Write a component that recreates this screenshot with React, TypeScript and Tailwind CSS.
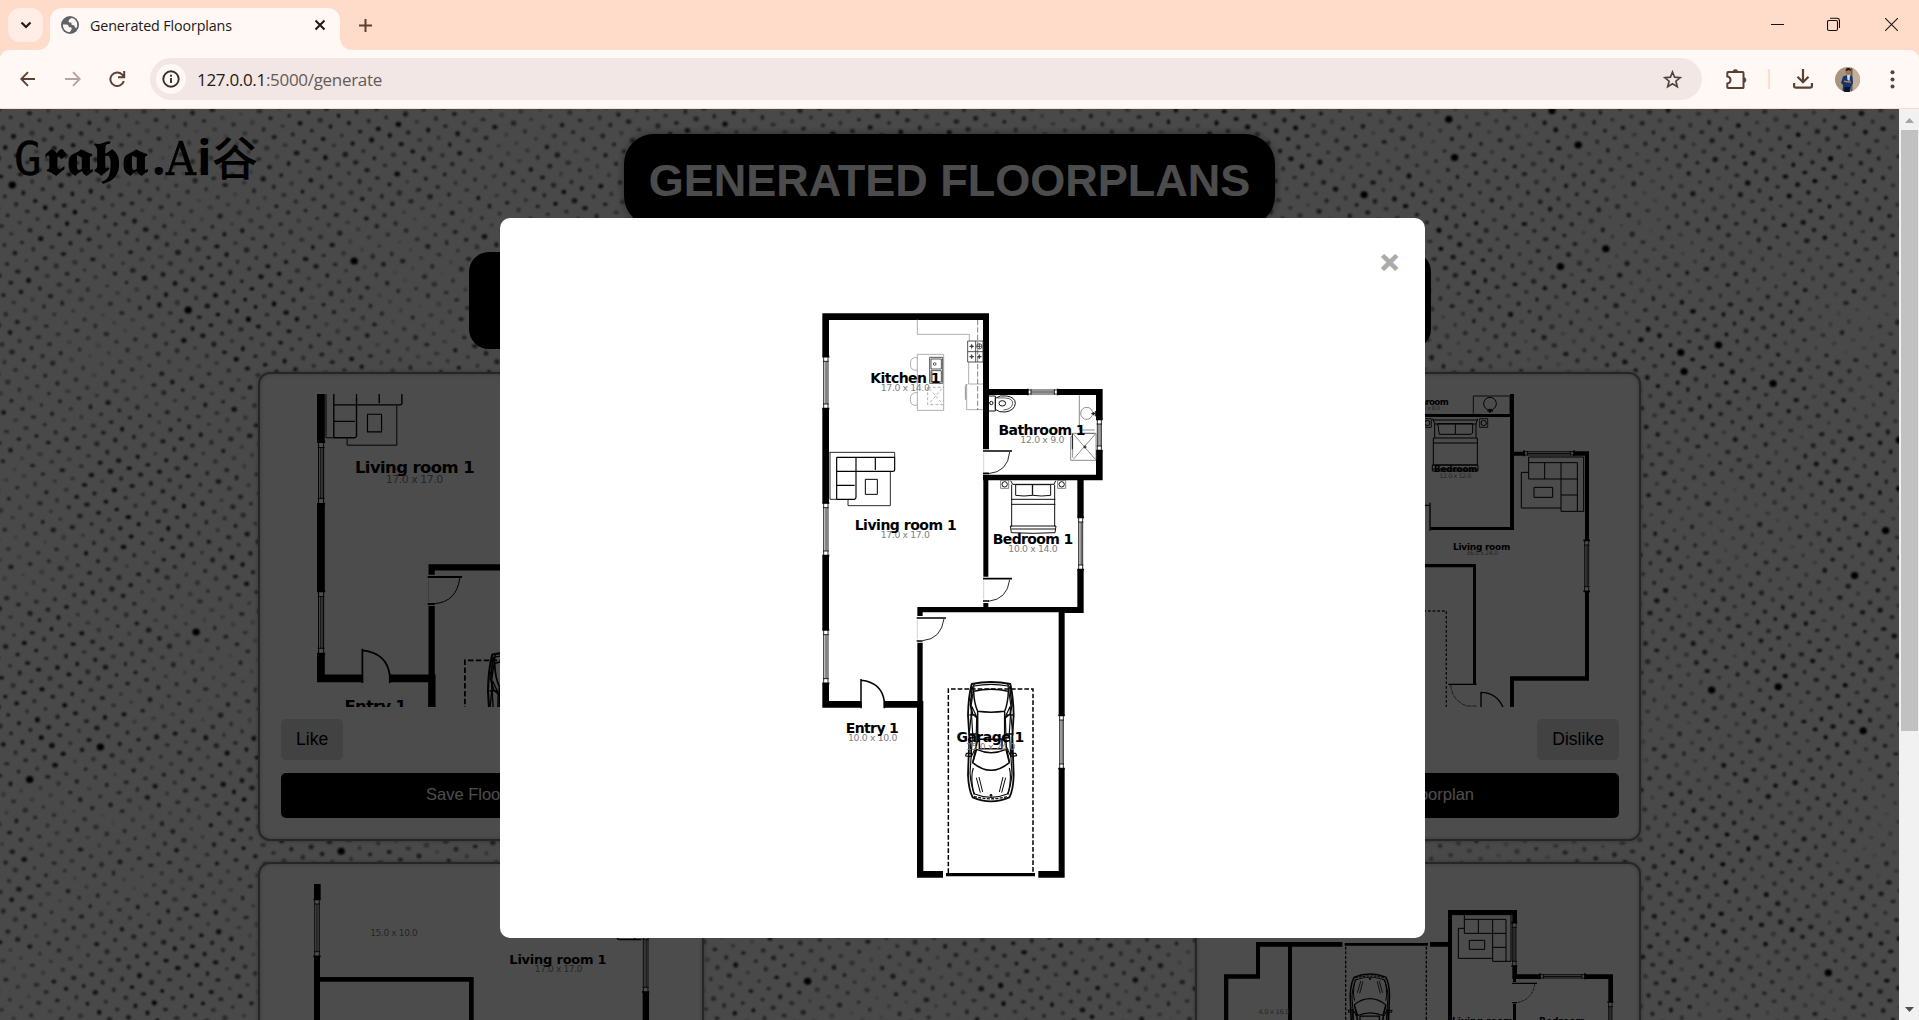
import React from "react";

const hash = (n: number) => {
  const s = Math.sin(n * 12.9898 + 78.233) * 43758.5453;
  return s - Math.floor(s);
};

type Dot = { x: number; y: number; rx: number; ry: number; o: number };

const dots: Dot[] = [];
for (let n = -180; n < 240; n++) {
  for (let m = -180; m < 180; m++) {
    const x = 1834.3 + 11 * (n - 145) - 7.7 * m;
    const y = 568 + 7.8 * (n - 145) + 11.2 * m;
    if (x < -5 || x > 1905 || y < -5 || y > 915) continue;
    const k = n * 91.7 + m * 37.31;
    const d = hash(k);
    const wave = 0.5 + 0.25 * (Math.sin(x / 47 + y / 83) + Math.sin(y / 39 - x / 71));
    const big = hash(k + 0.7) > 0.994;
    dots.push({
      x: Math.round((x + (hash(k + 0.3) - 0.5) * 1.6) * 10) / 10,
      y: Math.round((y + (hash(k + 0.5) - 0.5) * 1.6) * 10) / 10,
      rx: big ? 3.7 : 1.6 + hash(k + 0.2) * 1.3,
      ry: big ? 3.5 : 1.5 + hash(k + 0.9) * 1.2,
      o: big ? 1 : Math.min(1, 0.12 + d * 0.55 + wave * 0.35),
    });
  }
}

const Texture = () => (
  <svg className="absolute inset-0" width="1899" height="911" viewBox="0 0 1899 911">
    <defs>
      <filter id="soft" x="0" y="0" width="100%" height="100%">
        <feGaussianBlur stdDeviation="1.05" />
      </filter>
    </defs>
    <g filter="url(#soft)">
      {dots.map((d, i) => (
        <ellipse key={i} cx={d.x} cy={d.y} rx={d.rx} ry={d.ry} fillOpacity={d.o} />
      ))}
    </g>
  </svg>
);

/* Rooms are drawn in units of one third of a pixel. */
type TProps = { x: number; y: number; w: number; size?: number; children: string };
const Room = ({ x, y, w, size = 42, children }: TProps) => (
  <text x={x} y={y} textAnchor="middle" textLength={w} fontFamily="DejaVu Sans" fontWeight="bold" fontSize={size} fill="#000">
    {children}
  </text>
);
const Dim = ({ x, y, w, size = 28, children }: TProps) => (
  <text x={x} y={y} textAnchor="middle" textLength={w} fontFamily="DejaVu Sans" fontSize={size} fill="#808080">
    {children}
  </text>
);

type Box = { x: number; y: number; w: number; h: number };
const VWindow = ({ x, y, w, h }: Box) => (
  <g fill="none" stroke="#000" strokeWidth="2.5">
    <path d={`M${x + 2} ${y}V${y + h}M${x + w - 2} ${y}V${y + h}M${x} ${y + 14}H${x + w}M${x} ${y + h - 14}H${x + w}`} />
    <path d={`M${x + w * 0.4} ${y + 14}V${y + h - 14}M${x + w * 0.65} ${y + 14}V${y + h - 14}`} strokeWidth="1.8" />
    <path d={`M${x - 2} ${y}H${x + w + 2}M${x - 2} ${y + h}H${x + w + 2}`} strokeWidth="5" />
  </g>
);
const HWindow = ({ x, y, w, h }: Box) => (
  <g fill="none" stroke="#000" strokeWidth="2.5">
    <path d={`M${x} ${y + 2}H${x + w}M${x} ${y + h - 2}H${x + w}M${x + 10} ${y}V${y + h}M${x + w - 10} ${y}V${y + h}`} />
    <path d={`M${x + 10} ${y + h / 2}H${x + w - 10}`} strokeWidth="3" />
    <path d={`M${x} ${y - 2}V${y + h + 2}M${x + w} ${y - 2}V${y + h + 2}`} strokeWidth="5" />
  </g>
);

const Car = () => (
  <g fill="none" stroke="#0a0a0a" strokeWidth="4.500" strokeLinejoin="round">
    <path d="M515 282Q573 270 631 282Q640 320 641 375L637 440L641 555Q640 600 628 622Q573 646 518 622Q506 600 504 555L508 440L504 375Q505 320 515 282Z" strokeWidth="5.500" />
    <path d="M522 288Q573 278 624 288L633 350L628 430L636 550Q632 595 622 612Q573 632 524 612Q514 595 510 550L518 430L513 350Z" strokeWidth="3.500" />
    <path d="M521 304Q573 292 625 304Q624 340 614 364Q573 369 533 364Q522 340 521 304Z" />
    <path d="M533 366V448L519 515M614 366V448L628 515M533 448H614M538 445V476H606V445" />
    <path d="M530 478Q573 498 618 478L628 518Q573 564 518 518Z" />
    <path d="M516 350L530 380L528 470L514 500L508 430ZM630 350L616 380L619 470L633 500L638 430Z" strokeWidth="3.500" />
    <path d="M517 290L511 345L518 372L533 385M629 290L636 345L630 372L614 385M508 375H528M640 375H618M507 432H528M640 432H618" strokeWidth="4.500" />
    <path d="M516 490L499 490L497 498L514 500M630 490L647 490L650 497L632 500" strokeWidth="3.500" />
    <path d="M529 563L541 608M537 561L548 606M617 563L605 608M609 561L598 606" strokeWidth="3" />
    <path d="M520 534Q510 560 522 614M624 614Q636 560 628 534M524 282L512 300M622 282L634 300" strokeWidth="3.500" />
    <path d="M522 619Q573 634 624 619" strokeWidth="4" strokeDasharray="9 4" />
    <circle cx="573" cy="616" r="3" fill="#000" strokeWidth="3" />
    <circle cx="512" cy="330" r="3" strokeWidth="3" />
  </g>
);

const MainPlan = () => (
  <g>
    <path
      d="M67 70H567V90H67ZM67 70H87V200H67ZM67 355H87V640H67ZM67 797H87V1020H67ZM67 1180H87V1253H67ZM549 70H567V478H549ZM550 556H565V860H550ZM550 939H565V955H550ZM565 297H685V315H565ZM772 297H908V315H772ZM888 297H908V388H888ZM888 482H908V571H888ZM549 554H908V571H549ZM832 554H851V682H832ZM832 838H851V969H832ZM352 951H851V967H352ZM776 951H851V969H776ZM352 951H368V978H352ZM352 1058H368V1240H352ZM351 1233H370V1763H351ZM67 1233H185V1253H67ZM251 1233H370V1253H251ZM776 951H794V1277H776ZM776 1434H794V1763H776ZM351 1743H429V1763H351ZM715 1743H794V1763H715ZM438 1749H705V1759H438Z"
      fill="#000"
    />
    <VWindow x={69} y={200} w={17} h={156} />
    <VWindow x={69} y={639} w={17} h={158} />
    <VWindow x={69} y={1020} w={17} h={160} />
    <VWindow x={890} y={388} w={16} h={94} />
    <VWindow x={834} y={682} w={16} h={157} />
    <VWindow x={777} y={1276} w={15} h={160} />
    <HWindow x={683} y={298} w={90} h={16} />
    <g fill="none" stroke="#000" strokeWidth="3">
      <path d="M629 486Q624 546 565 551M629 869Q622 928 565 934M432 986Q424 1047 368 1052" strokeWidth="2.5" />
      <path d="M549 483H636M549 866H636M350 984H438M549 550H567M549 933H567M350 1053H368" strokeWidth="5" />
      <path d="M551 488V546M551 871V928M352 990V1048" stroke="#aaa" strokeWidth="1.5" />
      <path d="M183 1255V1167M184 1171Q246 1178 253 1235M253 1230V1255" strokeWidth="4.5" />
    </g>
    <path d="M445 1749V1197H699V1749" fill="none" stroke="#000" strokeWidth="4.5" strokeDasharray="14 6" />
    <g fill="none" stroke="#888" strokeWidth="2">
      <path d="M352 88V133H508V152M352 193H431V361H352ZM506 216V282M506 282H549M500 282V359H549M352 203Q331 200 331 222Q331 244 352 240M352 308Q331 306 331 328Q331 350 352 345M496 290V328M502 284H497V330" />
      <path d="M533 90V360" stroke="#444" strokeDasharray="16 6" />
      <path d="M383 292H431M383 292V344H431M388 296L426 340M426 296L388 340" strokeDasharray="9 6" />
    </g>
    <g fill="none" stroke="#333" strokeWidth="2.5">
      <path d="M503 153H549V216H503ZM503 185H549M527 153V216M389 202H428V280H389ZM393 207H424V237H393ZM393 242H424V276H393ZM396 245V276" />
      <path d="M508 169H522M515 162V176M531 169H545M538 162V176M508 200H522M515 193V207M531 200H545M538 193V207" />
      <circle cx="515" cy="169" r="3" /><circle cx="538" cy="169" r="8" /><circle cx="515" cy="200" r="3" /><circle cx="538" cy="200" r="3" />
      <circle cx="404" cy="222" r="4" />
    </g>
    <g fill="none" stroke="#111" strokeWidth="3">
      <path d="M564 318H586V363H564M586 325Q600 314 620 318Q646 322 646 340Q644 362 615 366Q598 368 586 358Z" />
      <ellipse cx="607" cy="340" rx="10" ry="8" /><circle cx="574" cy="339" r="5" />
      <path d="M592 324Q640 320 638 340Q636 358 610 360" strokeWidth="2" />
      <path d="M838 316V420H884M846 430H884M818 430H888V511H812V440H818V503" strokeWidth="2" stroke="#555" />
      <path d="M820 432L886 508M886 432L820 508" strokeWidth="2" stroke="#555" />
      <path d="M817 430V478" />
      <circle cx="860" cy="370" r="18" strokeWidth="2" stroke="#555" /><circle cx="855" cy="471" r="3" />
      <path d="M874 371H886M881 366V376M886 363V379" strokeWidth="3" />
      <path d="M602 571H626V595H602ZM773 571H797V595H773Z" strokeWidth="2" stroke="#444" /><circle cx="614" cy="583" r="8" /><circle cx="785" cy="583" r="8" />
      <path d="M632 572L638 583H762L767 572M635 584V710M764 584V710M647 584H697V616Q672 620 647 616ZM698 584H752V616Q725 620 698 616ZM634 628H766M634 643H766M631 708H768L765 728Q700 732 634 728ZM634 717H766" />
    </g>
    <g fill="none" stroke="#000" strokeWidth="3.500" strokeLinejoin="round">
      <path d="M88 487H284V504M90 488V628H110" strokeWidth="2.500" />
      <path d="M110 502H284V540Q284 544 278 544H110M110 502V628M110 628H164Q168 626 168 622V502M226 502V540M110 586H164" />
      <path d="M271 546V647H144V630" strokeWidth="2.5" />
      <path d="M196 568H232V613H196Z" strokeWidth="3" />
    </g>
    <g transform="translate(0 900)"><Car /></g>
    <Dim x={316} y={303} w={147}>17.0 x 14.0</Dim>
    <Room x={316} y={280} w={211}>Kitchen 1</Room>
    <Dim x={727} y={459} w={132}>12.0 x 9.0</Dim>
    <Room x={726} y={435} w={261}>Bathroom 1</Room>
    <Dim x={316} y={743} w={147}>17.0 x 17.0</Dim>
    <Room x={317} y={719} w={306}>Living room 1</Room>
    <Dim x={699} y={785} w={148}>10.0 x 14.0</Dim>
    <Room x={699} y={762} w={241}>Bedroom 1</Room>
    <Dim x={218} y={1352} w={148}>10.0 x 10.0</Dim>
    <Room x={217} y={1328} w={159}>Entry 1</Room>
    <Dim x={572} y={1379} w={148}>15.0 x 24.0</Dim>
    <Room x={571} y={1357} w={203}>Garage 1</Room>
  </g>
);

const Picture = ({ children }: { children?: React.ReactNode }) => (
  <svg className="block h-[313px] w-full overflow-hidden" viewBox="0 0 1203 939" preserveAspectRatio="xMinYMin meet">
    {children}
  </svg>
);

const PlanRight = () => (
  <g transform="translate(546 -102)">
    <path
      d="M330 102H342V510H330ZM0 162H335V171H0ZM92 501H340V510H92ZM340 275H375V287H340ZM520 274H567V287H520ZM555 274H567V540H555ZM555 695H567V962H555ZM330 949H567V962H330ZM330 949H342V1042H330ZM0 612H228V622H0ZM219 612H228V974H219Z"
      fill="#000"
    />
    <HWindow x={372} y={273} w={150} h={14} />
    <VWindow x={552} y={541} w={16} h={153} />
    <g fill="none" stroke="#000" strokeWidth="3">
      <path d="M220 161V108H330V161" strokeWidth="2.5" />
      <circle cx="270" cy="131" r="19" /><path d="M262 153H279M270 146V158" strokeWidth="5" />
      <path d="M70 176H94V202H70ZM239 176H263V202H239Z" strokeWidth="2.5" /><circle cx="82" cy="189" r="8" /><circle cx="251" cy="189" r="8" />
      <path d="M98 176L105 192H228L233 176M104 192V233M228 192V233M113 191H166V223H118ZM166 191H218V219L212 223H166M100 234H232V315H100ZM100 249H232M97 315H234V333H97ZM98 327H233M98 180H233" />
      <path d="M386 291H551V454H483V357H386ZM386 308H532V454M434 308V357M483 308V357M483 357H532M483 405H532M386 337H364V444H483M402 382H458V412H402Z" />
      <path d="M90 428V512M60 436H90M145 973H230M243 1042V996M243 997Q290 998 309 1042" strokeWidth="4" />
      <path d="M152 974Q155 1020 200 1038H230" strokeWidth="2" strokeDasharray="14 3" />
      <path d="M0 753H139V1042" strokeDasharray="8 6" strokeWidth="4" stroke="#222" />
    </g>
    <Room x={81} y={135} w={130} size={26}>Bathroom</Room>
    <Dim x={82} y={151} w={76} size={18}>12.0 x 8.0</Dim>
    <Room x={167} y={335} w={130} size={26}>Bedroom</Room>
    <Dim x={166} y={354} w={96} size={19}>12.0 x 12.0</Dim>
    <Room x={245} y={569} w={172} size={27}>Living room</Room>
    <Dim x={246} y={584} w={96} size={19}>36.0 x 24.0</Dim>
  </g>
);

const PlanLowerLeft = () => (
  <g transform="translate(-123 -102)">
    <path
      d="M222 102H242V148H222ZM222 318H240V1100H222ZM222 381H701V395H222ZM687 381H701V1100H687ZM1208 426H1227V1100H1208Z"
      fill="#000"
    />
    <VWindow x={222} y={148} w={18} h={171} />
    <VWindow x={1208} y={255} w={18} h={171} />
    <path d="M1132 240V265Q1134 269 1140 269H1204M1184 240V269" fill="none" stroke="#000" strokeWidth="4" />
    <Dim x={462} y={257} w={143} size={27}>15.0 x 10.0</Dim>
    <Dim x={956} y={365} w={143} size={27}>17.0 x 17.0</Dim>
    <Room x={954} y={342} w={292} size={39}>Living room 1</Room>
  </g>
);

const PlanLowerRight = () => (
  <g transform="translate(-174 -102)">
    <path
      d="M288 276H547V290H288ZM288 276H300V386H288ZM192 373H300V386H192ZM192 373H205V1100H192ZM384 285H396V1100H384ZM554 279H804V287H554ZM810 276H870V290H810ZM864 180H1071V194H864ZM864 180H876V1100H864ZM1057 180H1071V217H1057ZM1057 348H1071V387H1057ZM1059 387H1068V396H1059ZM1057 373H1140V387H1057ZM1275 373H1359V387H1275ZM1345 373H1359V456H1345ZM1059 461H1068V1100H1059Z"
      fill="#000"
    />
    <VWindow x={1056} y={218} w={14} h={130} />
    <HWindow x={1140} y={372} w={135} h={14} />
    <VWindow x={1344} y={456} w={14} h={130} />
    <g fill="none" stroke="#000" strokeWidth="3">
      <path d="M557 290V1100M799 290V1100" strokeDasharray="9 5" strokeWidth="4" stroke="#111" />
      <path d="M913 194V250H1038M878 194H1053V334H998V208M913 208H1038V334M955 208V250M998 292H1038M913 235H895V325H998M928 271H974V298H928Z" />
      <path d="M1056 400H1131M1056 458H1071" strokeWidth="4" />
      <path d="M1124 402Q1119 448 1071 458" strokeWidth="2" strokeDasharray="9 3" />
    </g>
    <g transform="translate(630 371) scale(.86 -.8) translate(-573 -635)"><Car /></g>
    <Dim x={342} y={491} w={94} size={20}>4.0 x 16.0</Dim>
    <Room x={967} y={521} w={182} size={27}>Living room</Room>
    <Room x={1206} y={521} w={138} size={27}>Bedroom</Room>
  </g>
);

const Card = ({ children }: { children?: React.ReactNode }) => (
  <div className="h-[469px] rounded-xl border-2 border-[#808080] bg-white py-5 pl-[21px] pr-5 shadow-[inset_0_0_4px_rgba(0,0,0,0.25),0_0_4px_rgba(0,0,0,0.3)]">
    <Picture>{children}</Picture>
    <div className="mt-3 flex justify-between text-[17.6px] leading-[21px]">
      <button className="rounded-[5px] bg-[#dcdcdc] px-[15px] py-[10px]">Like</button>
      <button className="rounded-[5px] bg-[#dcdcdc] px-[15px] py-[10px]">Dislike</button>
    </div>
    <button className="mt-[13px] h-[45px] w-full rounded-[5px] bg-black pb-[2px] text-[16.5px] text-white">Save Floorplan</button>
  </div>
);

const TabStrip = () => (
  <div className="flex h-[50px] items-start bg-[#ffdbc9]">
    <div className="ml-2 mt-2 flex h-[34px] w-[35px] items-center justify-center rounded-xl bg-[#ffede6]">
      <svg width="12" height="8" viewBox="0 0 12 8" fill="none" stroke="#221a16" strokeWidth="2.200"><path d="M1.5 1.5L6 6L10.500 1.5" /></svg>
    </div>
    <div className="relative ml-[7px] mt-2 flex h-[42px] w-[290px] items-center rounded-t-[12px] bg-[#fff8f5] pb-[8px] pl-[11px] pr-[14px]">
      <svg className="absolute bottom-0 -left-[14px]" width="14" height="14"><path d="M14 0V14H0Q14 14 14 0Z" fill="#fff8f5" /></svg>
      <svg className="absolute bottom-0 -right-[14px]" width="14" height="14"><path d="M0 0V14H14Q0 14 0 0Z" fill="#fff8f5" /></svg>
      <svg width="18" height="18" viewBox="0 0 18 18">
        <circle cx="9" cy="9" r="9" fill="#5f6368" />
        <path d="M1.800 8.400H5.200Q7.600 8.600 7.700 10.400L8 11.200H9.800Q11.200 11.800 10.600 13.200L8.800 16.200Q2.200 15.500 1.800 8.400ZM10.800 2L8.400 3.300L7.400 5.200L8.200 6.600H10.300L10.600 8.800L13.200 9.600L14.200 11.600L15.200 12.300Q16.800 9.800 16 6.800Q14.300 2.600 10.800 2Z" fill="#fff8f5" />
      </svg>
      <span className="ml-[11px] mt-px whitespace-nowrap font-['Open_Sans','Noto_Sans',sans-serif] text-[14.3px] tracking-[-0.13px] text-[#221a16]">Generated Floorplans</span>
      <svg className="ml-auto" width="12" height="12" viewBox="0 0 12 12" stroke="#221a16" strokeWidth="2"><path d="M1.500 1.500L10.500 10.500M10.500 1.500L1.500 10.500" /></svg>
    </div>
    <svg className="ml-[19px] mt-[19px]" width="13" height="13" viewBox="0 0 13 13" stroke="#5c4033" strokeWidth="2"><path d="M6.500 0V13M0 6.500H13" /></svg>
    <div className="ml-auto flex pt-[17px]">
      <svg className="mr-[43px]" width="13" height="15" viewBox="0 0 13 15" stroke="#111" strokeWidth="1"><path d="M0 7.500H13" /></svg>
      <svg className="mr-[45px]" width="13" height="15" viewBox="0 0 13 15" fill="none" stroke="#111" strokeWidth="1.100"><rect x=".5" y="3.500" width="10" height="10" rx="1.500" /><path d="M3 1.300H10Q12.500 1.300 12.500 4V11" /></svg>
      <svg className="mr-[21px] mt-[1px]" width="13" height="13" viewBox="0 0 13 13" stroke="#221a16" strokeWidth="1.100"><path d="M0 0L13 13M13 0L0 13" /></svg>
    </div>
  </div>
);

const Toolbar = () => (
  <div className="bg-[#ffdbc9]">
    <div className="flex h-[58px] items-center rounded-t-[9px] bg-[#fff8f5] text-[#5c4033]">
      <svg className="ml-5" width="16" height="16" viewBox="0 0 16 16" fill="none" stroke="#5c4033" strokeWidth="1.900"><path d="M15 8H2M8 1.200L1.300 8L8 14.800" /></svg>
      <svg className="ml-[29px]" width="16" height="16" viewBox="0 0 16 16" fill="none" stroke="#b5a5a0" strokeWidth="1.900"><path d="M0 8H14M8 1.200L14.700 8L8 14.800" /></svg>
      <svg className="ml-[28px]" width="17" height="17" viewBox="0 0 17 17" fill="none" stroke="#5c4033" strokeWidth="2"><path d="M14.800 10A6.800 6.800 0 1 1 13.200 3.600L15 5.500M15.200 0V6.200H9" /></svg>
      <div className="ml-6 flex h-[42px] w-[1552px] items-center rounded-full bg-[#f2e7e4] pl-[6px] pr-5">
        <div className="flex size-[30px] items-center justify-center rounded-full bg-[#fff8f5]">
          <svg width="18" height="18" viewBox="0 0 18 18" fill="none" stroke="#362f2c" strokeWidth="1.900"><circle cx="9" cy="9" r="7.700" /><path d="M9 8V13M9 4.800V6.700" /></svg>
        </div>
        <span className="ml-[11px] mt-[2px] font-['Open_Sans','Noto_Sans',sans-serif] text-[17px] tracking-[-0.31px] text-[#655a56]">
          <span className="text-[#221a16]">127.0.0.1</span>:5000/generate
        </span>
        <svg className="ml-auto" width="19" height="19" viewBox="0 0 19 19" fill="none" stroke="#53433c" strokeWidth="1.700"><path d="M9.500 2L11.600 7.200L17.200 7.600L12.900 11.200L14.300 16.700L9.500 13.700L4.700 16.700L6.100 11.200L1.800 7.600L7.400 7.200Z" /></svg>
      </div>
      <svg className="ml-6" width="21" height="21" viewBox="0 0 21 21" fill="none" stroke="#5c4033" strokeWidth="2"><path d="M2 3H16.800Q17.500 3 17.500 4V18.500Q17.500 19 16.800 19H2Q1.300 19 1.300 18.300V14.500Q4.500 14 4.500 11Q4.500 8 1.300 7.500V4Q1.300 3 2 3Z" /><path d="M7 2.800A2.400 2.400 0 0 1 11.800 2.800ZM17.500 8.500A2.400 2.400 0 0 1 17.500 13.500Z" fill="#5c4033" strokeWidth=".6" /></svg>
      <div className="ml-[21px] h-5 w-[2px] bg-[#ffdbc9]" />
      <svg className="ml-[23px]" width="20" height="20" viewBox="0 0 20 20" fill="none" stroke="#5c4033" strokeWidth="2.200"><path d="M10 0V13M4.500 7.800L10 13.300L15.500 7.800M1.100 14V17Q1.100 18.700 3 18.700H17Q18.900 18.700 18.900 17V14" /></svg>
      <svg className="ml-[22px]" width="25" height="25" viewBox="0 0 25 25">
        <defs><clipPath id="face"><circle cx="12.500" cy="12.500" r="12.500" /></clipPath></defs>
        <g clipPath="url(#face)">
          <rect width="25" height="25" fill="#a8957f" /><rect x="16" width="9" height="25" fill="#c2b09a" /><rect x="16" width="1.500" height="25" fill="#6e5d4d" />
          <path d="M7.500 25L8 18L6 16L8 9.500L12 8H15L17.500 10L18 16L16 20L15 25Z" fill="#17366f" />
          <path d="M10 20H15L14.500 25H9Z" fill="#0e1224" /><path d="M12 8H15L14.500 14L12.500 13Z" fill="#d5dced" />
          <circle cx="13.300" cy="4.800" r="2.800" fill="#a76f55" /><path d="M10.500 4Q10.500 1 13.500 1Q16 1 16 4L14 3Z" fill="#141418" /><path d="M9 13.500L16 14.500V16L9 15Z" fill="#b47a5c" />
        </g>
      </svg>
      <svg className="ml-[30px]" width="5" height="19" viewBox="0 0 5 19" fill="#5c4033"><circle cx="2.500" cy="2.200" r="2" /><circle cx="2.500" cy="9.400" r="2" /><circle cx="2.500" cy="16.500" r="2" /></svg>
    </div>
    <div className="h-px bg-[#f7dccf]" />
  </div>
);

const Logo = () => (
  <div className="absolute left-[14px] top-[16px] flex h-[60px] items-baseline whitespace-nowrap text-[48px] leading-[60px] text-black">
    <span className="w-[30px] font-['DejaVu_Sans_Mono',monospace] text-[46px] [-webkit-text-stroke:0.3px_black]">𝙶</span>
    <span className="w-[108px]"><span className="inline-block origin-left scale-x-[1.17] text-[48px] [-webkit-text-stroke:1.4px_black]">𝖗𝖆𝖍𝖆</span></span>
    <span className="w-[14px] font-['Open_Sans',sans-serif] font-bold">.</span>
    <span className="w-[31px]"><span className="inline-block origin-left scale-x-[0.88] font-['DejaVu_Serif',serif] text-[47px] [-webkit-text-stroke:0.6px_black]">A</span></span>
    <span className="w-[15px] font-['Open_Sans',sans-serif] font-bold">i</span>
    <span className="font-['Noto_Sans_CJK_SC',sans-serif] text-[46px] font-medium">谷</span>
  </div>
);

const Scrollbar = () => (
  <div className="flex w-5 flex-col items-center bg-[#f1f1f1]">
    <svg className="mt-[9px]" width="9" height="5"><path d="M0 5L4.500 0L9 5Z" fill="#a3a3a3" /></svg>
    <div className="ml-px mt-[7px] h-[601px] w-[17px] bg-[#c1c1c1]" />
    <svg className="mb-[8px] mt-auto" width="9" height="5"><path d="M0 0L4.500 5L9 0Z" fill="#505050" /></svg>
  </div>
);

export default function App() {
  return (
    <div className="h-[1020px] w-[1919px] overflow-hidden font-['Liberation_Sans',Arial,sans-serif]">
      <TabStrip />
      <Toolbar />
      <div className="flex h-[911px]">
        <div className="relative w-[1899px] overflow-hidden bg-[#f6f6f6]">
          <Texture />
          <Logo />
          <div className="relative flex flex-col items-center pt-[25px]">
            <h1 className="flex h-[92px] w-[651px] items-center justify-center whitespace-nowrap rounded-[30px] bg-black pt-[2px] text-[45px] font-bold text-white shadow-[0_0_8px_rgba(0,0,0,0.4)]">
              GENERATED FLOORPLANS
            </h1>
            <div className="mt-[26px] h-[97px] w-[962px] rounded-[20px] bg-black" />
            <div className="mt-[23px] grid w-[1383px] grid-cols-[446px_445px_446px] justify-between gap-y-[21px]">
              <Card><g transform="translate(29.3 -606) scale(1.174)"><MainPlan /></g></Card>
              <Card />
              <Card><PlanRight /></Card>
              <Card><PlanLowerLeft /></Card>
              <div />
              <Card><PlanLowerRight /></Card>
            </div>
          </div>
          <div className="absolute inset-0 bg-black/70 pl-[500px] pt-[109px]">
            <div className="relative h-[720px] w-[925px] rounded-[10px] bg-white pl-[300px] pt-[72px]">
              <svg className="block" width="320" height="600" viewBox="0 0 960 1800"><MainPlan /></svg>
              <button className="absolute right-[26px] top-[28px] text-[32px] font-bold leading-8 text-[#aaa] [-webkit-text-stroke:1px_#aaa]">×</button>
            </div>
          </div>
        </div>
        <Scrollbar />
      </div>
    </div>
  );
}
